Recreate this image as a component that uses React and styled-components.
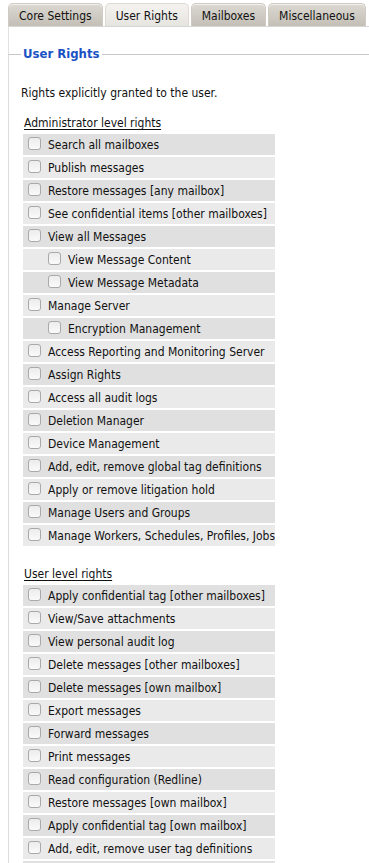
import React from "react";
import styled, { createGlobalStyle } from "styled-components";

const Global = createGlobalStyle`
  html, body { margin: 0; padding: 0; background: #fff; }
  body { font-family: "DejaVu Sans Condensed", "DejaVu Sans", sans-serif; font-size: 12px; color: #111; }
`;

const Page = styled.div`
  padding: 3px 0 0 8px;
  overflow: hidden;
  height: 863px;
  box-sizing: border-box;
`;

const TabBar = styled.div`
  display: flex;
  gap: 2px;
  border-bottom: 1px solid #d6d6d6;
`;

const Tab = styled.div`
  height: 23px;
  line-height: 24px;
  padding: 0 10px;
  border-radius: 5px 5px 0 0;
  color: #111;
  white-space: nowrap;
  background: ${(p) =>
    p.$active
      ? "linear-gradient(#f4f3f0, #e6e4df)"
      : "linear-gradient(#dcd9d2, #c3bfb7)"};
  box-shadow: inset 0 1px 0 #f2f1ee;
  border: 1px solid ${(p) => (p.$active ? "#dedbd5" : "#cfcbc3")};
  border-bottom: none;
  box-sizing: border-box;
`;

const Panel = styled.div`
  border-left: 1px solid #e2e2e2;
  padding-top: 19px;
`;

const Fieldset = styled.fieldset`
  margin: 0 0 0 -1px;
  padding: 0 0 0 12px;
  border: 0;
  border-top: 1px solid #c8c8c8;
  border-left: 1px solid #dcdcdc;
  min-width: 0;
`;

const Legend = styled.legend`
  padding: 0 2px;
  font-weight: bold;
  font-size: 13px;
  line-height: 16px;
  color: #1a52c4;
`;

const Intro = styled.p`
  margin: 23px 0 0 0;
  line-height: 16px;
`;

const GroupTitle = styled.div`
  margin: ${(p) => (p.$first ? "14px" : "20px")} 0 3px 3px;
  line-height: 16px;
  text-decoration: underline;
  text-underline-offset: 2px;
`;

const List = styled.div`
  display: flex;
  flex-direction: column;
  gap: 2px;
  width: 252px;
  margin-left: 2px;
`;

const Row = styled.label`
  display: flex;
  align-items: center;
  gap: 7px;
  height: 21px;
  padding-left: ${(p) => (p.$nested ? 25 : 5)}px;
  background: ${(p) => (p.$odd ? "#e0e0e0" : "#eaeaea")};
  white-space: nowrap;
  overflow: hidden;
  box-sizing: border-box;
`;

const Box = styled.input.attrs({ type: "checkbox" })`
  appearance: none;
  flex: none;
  margin: 0 0 2px 0;
  width: 13px;
  height: 13px;
  border: 1px solid #a9a9a9;
  border-radius: 3px;
  background: linear-gradient(#ececec, #fafafa);
  box-sizing: border-box;
`;

const admin = [
  ["Search all mailboxes"],
  ["Publish messages"],
  ["Restore messages [any mailbox]"],
  ["See confidential items [other mailboxes]"],
  ["View all Messages"],
  ["View Message Content", true],
  ["View Message Metadata", true],
  ["Manage Server"],
  ["Encryption Management", true],
  ["Access Reporting and Monitoring Server"],
  ["Assign Rights"],
  ["Access all audit logs"],
  ["Deletion Manager"],
  ["Device Management"],
  ["Add, edit, remove global tag definitions"],
  ["Apply or remove litigation hold"],
  ["Manage Users and Groups"],
  ["Manage Workers, Schedules, Profiles, Jobs"],
];

const user = [
  ["Apply confidential tag [other mailboxes]"],
  ["View/Save attachments"],
  ["View personal audit log"],
  ["Delete messages [other mailboxes]"],
  ["Delete messages [own mailbox]"],
  ["Export messages"],
  ["Forward messages"],
  ["Print messages"],
  ["Read configuration (Redline)"],
  ["Restore messages [own mailbox]"],
  ["Apply confidential tag [own mailbox]"],
  ["Add, edit, remove user tag definitions"],
  [""],
];

function Rights({ items }) {
  return (
    <List>
      {items.map(([label, nested], i) => (
        <Row key={label + i} $nested={nested} $odd={i % 2 === 0}>
          <Box />
          <span>{label}</span>
        </Row>
      ))}
    </List>
  );
}

export default function App() {
  return (
    <>
      <Global />
      <Page>
        <TabBar>
          <Tab>Core Settings</Tab>
          <Tab $active>User Rights</Tab>
          <Tab>Mailboxes</Tab>
          <Tab>Miscellaneous</Tab>
        </TabBar>
        <Panel>
          <Fieldset>
            <Legend>User Rights</Legend>
            <Intro>Rights explicitly granted to the user.</Intro>
            <GroupTitle $first>Administrator level rights</GroupTitle>
            <Rights items={admin} />
            <GroupTitle>User level rights</GroupTitle>
            <Rights items={user} />
          </Fieldset>
        </Panel>
      </Page>
    </>
  );
}
